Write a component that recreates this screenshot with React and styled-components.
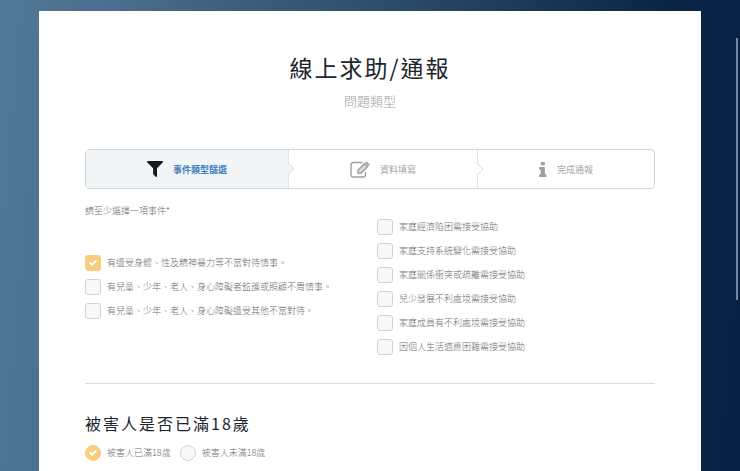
import { useState } from "react";
import styled, { createGlobalStyle } from "styled-components";

const incidents = [
  "有遭受身體、性及精神暴力等不當對待情事。",
  "有兒童、少年、老人、身心障礙者監護或照顧不周情事。",
  "有兒童、少年、老人、身心障礙遭受其他不當對待。",
];

const familyNeeds = [
  "家庭經濟陷困需接受協助",
  "家庭支持系統變化需接受協助",
  "家庭關係衝突或疏離需接受協助",
  "兒少發展不利處境需接受協助",
  "家庭成員有不利處境需接受協助",
  "因個人生活適應困難需接受協助",
];

const FilterIcon = () => (
  <svg width="16" height="16" viewBox="0 0 16 16" fill="currentColor" aria-hidden="true">
    <path d="M.9 0h14.2c.8 0 1.1.9.6 1.4L10 7.2v8c0 .7-.7 1-1.2.6l-2.4-2.3a1 1 0 0 1-.3-.7V7.2L.3 1.4C-.2.9.1 0 .9 0Z" />
  </svg>
);

const EditIcon = () => (
  <svg width="20" height="17" viewBox="0 0 20 17" fill="none" stroke="currentColor" aria-hidden="true">
    <path d="M12.5 1.5H3.6A2.6 2.6 0 0 0 1 4.1v9.3A2.6 2.6 0 0 0 3.6 16h9.3a2.6 2.6 0 0 0 2.6-2.6V11" strokeWidth="1.4" />
    <path d="m8 9.2 6.6-6.6 3 3-6.6 6.6H8Z" fill="currentColor" fillOpacity=".35" strokeWidth="1.5" />
    <path d="m15.7 1.5.8-.8 3 3-.8.8Z" fill="currentColor" strokeWidth=".8" />
  </svg>
);

const InfoIcon = () => (
  <svg width="8" height="15" viewBox="0 0 8 15" fill="currentColor" aria-hidden="true">
    <path d="M2.5 0h2.7c.4 0 .7.3.7.7v1.8c0 .4-.3.7-.7.7H2.5c-.4 0-.7-.3-.7-.7V.7c0-.4.3-.7.7-.7ZM.7 4.9h4.5c.4 0 .7.3.7.7v6.7h.9c.4 0 .7.3.7.7v1.3c0 .4-.3.7-.7.7H.7c-.4 0-.7-.3-.7-.7V13c0-.4.3-.7.7-.7h.9V7.6H.7c-.4 0-.7-.3-.7-.7V5.6c0-.4.3-.7.7-.7Z" />
  </svg>
);

const Arrow = ({ active }) => (
  <ArrowTip viewBox="0 0 7 12" $active={active} aria-hidden="true">
    <path d="M0 0 6 6 0 12" />
  </ArrowTip>
);

const CheckList = ({ items, checked, onToggle }) => (
  <List>
    {items.map((item) => (
      <Option key={item}>
        <CheckBox
          type="checkbox"
          checked={checked.includes(item)}
          onChange={() => onToggle(item)}
        />
        {item}
      </Option>
    ))}
  </List>
);

export default function App() {
  const [checked, setChecked] = useState([incidents[0]]);
  const [isAdult, setIsAdult] = useState(true);

  const toggle = (item) => {
    setChecked(
      checked.includes(item)
        ? checked.filter((c) => c !== item)
        : [...checked, item]
    );
  };

  return (
    <>
      <GlobalStyle />
      <Page>
        <Card>
          <Header>
            <Title>線上求助/通報</Title>
            <Subtitle>問題類型</Subtitle>
          </Header>
          <Steps>
            <Step $size={203} $active aria-current="step">
              <FilterIcon />
              事件類型篩選
              <Arrow active />
            </Step>
            <Step $size={189}>
              <EditIcon />
              資料填寫
              <Arrow />
            </Step>
            <Step $size={177}>
              <InfoIcon />
              完成通報
            </Step>
          </Steps>
          <form>
            <Columns>
              <Incidents>
                <Legend>
                  請至少選擇一項事件<Required>*</Required>
                </Legend>
                <CheckList items={incidents} checked={checked} onToggle={toggle} />
              </Incidents>
              <Needs>
                <CheckList items={familyNeeds} checked={checked} onToggle={toggle} />
              </Needs>
            </Columns>
            <Divider />
            <Question id="age">被害人是否已滿18歲</Question>
            <Answers role="radiogroup" aria-labelledby="age">
              <Option>
                <RadioButton
                  type="radio"
                  name="age"
                  checked={isAdult}
                  onChange={() => setIsAdult(true)}
                />
                被害人已滿18歲
              </Option>
              <Option>
                <RadioButton
                  type="radio"
                  name="age"
                  checked={!isAdult}
                  onChange={() => setIsAdult(false)}
                />
                被害人未滿18歲
              </Option>
            </Answers>
          </form>
        </Card>
        <ScrollThumb />
      </Page>
    </>
  );
}

const GlobalStyle = createGlobalStyle`
  * {
    box-sizing: border-box;
  }

  body {
    margin: 0;
    font-family: "Noto Sans CJK TC", sans-serif;
    font-size: 9px;
    font-weight: 300;
    color: #6c6e72;
  }
`;

const Page = styled.div`
  display: flex;
  flex-direction: column;
  height: 100vh;
  overflow: hidden;
  padding: 11px 39px 0;
  background: linear-gradient(95deg, #527896 0%, #4b6f8e 14%, #2a4a69 52%, #0b2546 85%, #082042 100%);
`;

const Card = styled.main`
  flex: 1 0 auto;
  padding: 40px 46px 0;
  background: #fff;
`;

const Header = styled.header`
  text-align: center;
`;

const Title = styled.h1`
  margin: 0;
  font-size: 23px;
  line-height: 32px;
  font-weight: 400;
  letter-spacing: 2px;
  color: #20242c;
`;

const Subtitle = styled.p`
  margin: 8px 0 0;
  font-size: 13px;
  line-height: 20px;
  color: #a0a0a2;
`;

const Steps = styled.ol`
  display: flex;
  margin: 38px 0 0;
  padding: 0;
  list-style: none;
  border: 1px solid #d3d5d6;
  border-radius: 4px;
`;

const Step = styled.li`
  position: relative;
  flex: ${(props) => props.$size} 1 0;
  display: flex;
  align-items: center;
  justify-content: center;
  gap: 10px;
  height: 38px;
  font-weight: ${(props) => (props.$active ? 700 : 400)};
  color: ${(props) => (props.$active ? "#4180bd" : "#a5a5a5")};
  background: ${(props) => (props.$active ? "#f2f5f7" : "transparent")};

  & + & {
    border-left: 1px solid #e2e4e5;
  }

  > svg:first-child {
    color: ${(props) => (props.$active ? "#17191c" : "#a0a0a0")};
  }
`;

const ArrowTip = styled.svg`
  position: absolute;
  left: 100%;
  top: 13px;
  z-index: 1;
  width: 7px;
  height: 12px;
  fill: ${(props) => (props.$active ? "#f2f5f7" : "#fff")};
  stroke: #d9dbdc;
`;

const Columns = styled.div`
  display: grid;
  grid-template-columns: 292px 1fr;
  margin-top: 15px;
`;

const Incidents = styled.fieldset`
  margin: 0;
  padding: 0;
  border: 0;
`;

const Legend = styled.legend`
  margin-bottom: 37px;
  padding: 0;
  line-height: 14px;
`;

const Needs = styled.div`
  padding-top: 15px;
`;

const Required = styled.span`
  color: #d0223c;
`;

const List = styled.div`
  display: flex;
  flex-direction: column;
  gap: 8px;
`;

const Option = styled.label`
  display: flex;
  align-items: center;
  gap: 6px;
  line-height: 16px;
`;

const CheckBox = styled.input`
  appearance: none;
  display: grid;
  place-items: center;
  flex: none;
  width: 16px;
  height: 16px;
  margin: 0;
  background: #f8f8f8;
  border: 1px solid #d3d3d4;
  border-radius: 3px;

  &:checked {
    background: #f8cd7e;
    border-color: #f8cd7e;
  }

  &:checked::before {
    content: "";
    width: 8px;
    height: 6px;
    background: #fff;
    clip-path: polygon(0 48%, 16% 26%, 38% 52%, 84% 0, 100% 22%, 38% 100%);
  }
`;

const RadioButton = styled(CheckBox)`
  border-radius: 50%;
`;

const Divider = styled.hr`
  margin: 28px 0 0;
  border: 0;
  border-top: 1px solid #dcdcdc;
`;

const Question = styled.h2`
  margin: 27px 0 0;
  font-size: 16px;
  line-height: 24px;
  font-weight: 400;
  letter-spacing: 2px;
  color: #20242c;
`;

const Answers = styled.div`
  display: flex;
  gap: 9px;
  margin-top: 10px;
`;

const ScrollThumb = styled.div`
  position: fixed;
  top: 38px;
  right: 2px;
  width: 2px;
  height: 262px;
  background: #7286a5;
`;
